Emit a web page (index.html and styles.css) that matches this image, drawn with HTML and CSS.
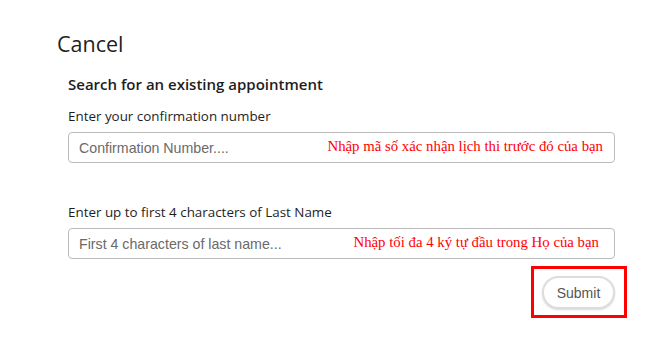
FILE: index.html
```html
<!DOCTYPE html>
<html>
<head>
    <meta charset="UTF-8">
    <title>Cancel</title>
    <link rel="stylesheet" href="styles.css">
</head>
<body>
    <div class="page">
        <h1>Cancel</h1>
        <form class="search">
            <h2>Search for an existing appointment</h2>
            <label class="label" for="conf">Enter your confirmation number</label>
            <div class="field">
                <input type="text" id="conf" placeholder="Confirmation Number....">
                <span class="note">Nhập mã số xác nhận lịch thi trước đó của bạn</span>
            </div>
            <label class="label second" for="last">Enter up to first 4 characters of Last Name</label>
            <div class="field">
                <input type="text" id="last" placeholder="First 4 characters of last name...">
                <span class="note note-2">Nhập tối đa 4 ký tự đầu trong Họ của bạn</span>
            </div>
            <div class="actions">
                <div class="highlight">
                    <button type="button" class="submit">Submit</button>
                </div>
            </div>
        </form>
    </div>
</body>
</html>
```

FILE: styles.css
```css
body {
    margin: 0;
    background: #fff;
    font-family: "Open Sans", "Noto Sans", sans-serif;
    color: #1e1e1e;
}
.page {
    padding: 29px 0 0 57px;
}
h1 {
    margin: 0;
    font-size: 21.5px;
    font-weight: 500;
    line-height: 30px;
}
.search {
    width: 547px;
    padding-left: 11px;
    margin-top: 14px;
}
h2 {
    margin: 0;
    font-size: 15px;
    font-weight: 600;
    line-height: 22px;
}
.label {
    display: block;
    margin-top: 11px;
    font-size: 13.4px;
    line-height: 20px;
}
.label.second {
    margin-top: 39px;
}
.field {
    position: relative;
    margin-top: 6px;
}
.field input {
    box-sizing: border-box;
    display: block;
    width: 100%;
    height: 31px;
    padding: 0 10px;
    border: 1px solid #bbb;
    border-radius: 4px;
    font-family: "Liberation Sans", Arial, sans-serif;
    font-size: 14.2px;
    color: #333;
}
.field input::placeholder {
    color: #6a6a6a;
}
.note {
    position: absolute;
    right: 12px;
    top: 6px;
    font-family: "Liberation Serif", "Times New Roman", serif;
    font-size: 14.8px;
    color: #ff0000;
}
.note-2 {
    right: 16px;
}
.actions {
    display: flex;
    justify-content: flex-end;
    margin-top: 7px;
    margin-right: -12px;
}
.highlight {
    border: 3px solid #f00;
    padding: 7px 9px 6px 8px;
}
.submit {
    display: block;
    width: 73px;
    height: 33px;
    border: 2px solid #ddd;
    border-radius: 17px;
    background: #fff;
    box-shadow: 0 1px 2px rgba(0,0,0,0.15);
    font-family: "Liberation Sans", Arial, sans-serif;
    font-size: 14px;
    color: #555;
    cursor: pointer;
}
```
